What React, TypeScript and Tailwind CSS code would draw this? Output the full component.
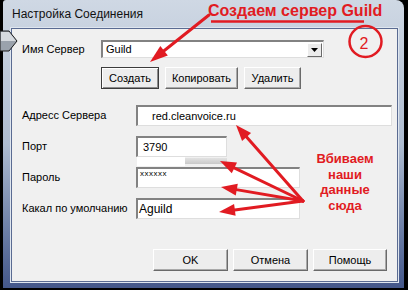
import React from 'react';

const RED = '#e11b22';

// arrow head helper: line from (x1,y1) to tip (x2,y2)
function Arrow({ x1, y1, x2, y2, len = 16, half = 6 }: { x1: number; y1: number; x2: number; y2: number; len?: number; half?: number }) {
  const dx = x2 - x1;
  const dy = y2 - y1;
  const d = Math.hypot(dx, dy);
  const ux = dx / d;
  const uy = dy / d;
  const bx = x2 - ux * len;
  const by = y2 - uy * len;
  const px = -uy * half;
  const py = ux * half;
  return (
    <g>
      <line x1={x1} y1={y1} x2={bx + ux * 2} y2={by + uy * 2} stroke={RED} strokeWidth={3} strokeLinecap="round" />
      <polygon points={`${x2},${y2} ${bx + px},${by + py} ${bx - px},${by - py}`} fill={RED} />
    </g>
  );
}

function Btn({ children, w, def }: { children: React.ReactNode; w: string; def?: boolean }) {
  return (
    <div
      className={`${w} shrink-0 h-[22px] flex items-center justify-center bg-[#ededed] text-[11px] text-black ${
        def
          ? 'border border-[#3c3c3c] shadow-[inset_1px_1px_0_#ffffff,inset_-1px_-1px_0_#8c8c8c]'
          : 'border border-t-white border-l-white border-b-[#6a6a6a] border-r-[#6a6a6a] shadow-[inset_-1px_-1px_0_#a9a9a9]'
      }`}
    >
      {children}
    </div>
  );
}

function Field({ w, children, cls = '' }: { w: string; children?: React.ReactNode; cls?: string }) {
  return (
    <div
      className={`${w} shrink-0 h-[21px] bg-white flex items-center border-t-2 border-l-2 border-t-[#828282] border-l-[#828282] border-b border-r border-b-[#dedede] border-r-[#dedede] text-[11px] text-black ${cls}`}
    >
      {children}
    </div>
  );
}

export default function App() {
  return (
    <div className="relative w-[408px] h-[290px] bg-black overflow-hidden" style={{ fontFamily: '"Liberation Sans", Arial, sans-serif' }}>
      {/* window */}
      <div className="ml-[3px] w-[401px] h-[288px] rounded-tr-[8px] rounded-tl-[3px] flex flex-col bg-gradient-to-b from-[#cfd8e4] via-[#aebcd0] to-[#44578a]">
        <div className="h-[28px] flex items-center pl-[9px] text-[12px] text-[#111]">Настройка Соединения</div>

        <div className="flex-1 ml-[8px] mr-[6px] mb-[6px] bg-[#f0f0f0] border border-[#5a6b92] shadow-[0_0_0_1px_#dfe6ef] flex flex-col pl-[10px] pr-[4px] pt-[11px]">
          {/* server name */}
          <div className="flex items-center h-[18px]">
            <div className="w-[79px] shrink-0 text-[11px] text-black">Имя Сервер</div>
            <div className="w-[223px] shrink-0 h-[18px] bg-white flex items-center justify-between border-t-2 border-l-2 border-t-[#828282] border-l-[#828282] border-b border-r border-b-[#dedede] border-r-[#dedede]">
              <span className="pl-[3px] text-[11px] text-black">Guild</span>
              <div className="w-[15px] h-[14px] mr-[1px] flex items-center justify-center bg-[#ececec] border border-t-white border-l-white border-b-[#6a6a6a] border-r-[#6a6a6a]">
                <svg width="7" height="4" viewBox="0 0 7 4">
                  <polygon points="0,0 7,0 3.5,4" fill="#000" />
                </svg>
              </div>
            </div>
          </div>

          {/* buttons */}
          <div className="flex mt-[9px] ml-[79px] gap-[6px]">
            <Btn w="w-[58px]" def>
              Создать
            </Btn>
            <Btn w="w-[73px]">Копировать</Btn>
            <Btn w="w-[57px]">Удалить</Btn>
          </div>

          {/* fields */}
          <div className="flex flex-col gap-[10px] mt-[16px]">
            <div className="flex items-center">
              <div className="w-[114px] shrink-0 text-[11px] text-black">Адресс Сервера</div>
              <Field w="w-[256px]" cls="pl-[14px]">
                red.cleanvoice.ru
              </Field>
            </div>
            <div className="flex items-center">
              <div className="w-[114px] shrink-0 text-[11px] text-black">Порт</div>
              <Field w="w-[91px]" cls="pl-[5px]">
                3790
              </Field>
            </div>
            <div className="flex items-center">
              <div className="w-[114px] shrink-0 text-[11px] text-black">Пароль</div>
              <Field w="w-[164px]" cls="pl-[2px] !items-start">
                <span className="text-[8px] leading-[10px] tracking-[0.5px]">xxxxxx</span>
              </Field>
            </div>
            <div className="flex items-center">
              <div className="w-[114px] shrink-0 text-[11px] text-black">Какал по умолчанию</div>
              <Field w="w-[164px]" cls="pl-[1px] text-[12px]">
                Aguild
              </Field>
            </div>
          </div>

          {/* bottom buttons */}
          <div className="flex justify-end gap-[5px] mt-[30px] mr-[6px]">
            <Btn w="w-[75px]">OK</Btn>
            <Btn w="w-[75px]">Отмена</Btn>
            <Btn w="w-[74px]">Помощь</Btn>
          </div>
        </div>
      </div>

      {/* paste artefact under port field */}
      <div className="absolute left-[137px] top-[157px] w-[48px] h-[9px] bg-white" />
      <div className="absolute left-[185px] top-[158px] w-[42px] h-[6px] bg-gradient-to-b from-[#e2e2e2] to-[#c9c9c9]" />

      {/* left pointer */}
      <svg className="absolute left-0 top-[29px]" width="18" height="24" viewBox="0 0 18 24">
        <polygon points="0,2 9,2 17,12 9,22 0,22" fill="#9aa2ac" stroke="#1b1b1b" strokeWidth="1" />
        <polygon points="1,3 9,3 16,12 1,12" fill="#d6dadf" />
      </svg>

      {/* annotations */}
      <div className="absolute left-[208px] top-[3px] text-[16px] leading-[16px] font-bold whitespace-nowrap" style={{ color: RED }}>
        Создаем сервер Guild
      </div>
      <div
        className="absolute left-[305px] top-[151px] w-[80px] text-center text-[13px] leading-[15.5px] font-bold"
        style={{ color: RED }}
      >
        Вбиваем
        <br />
        наши
        <br />
        данные
        <br />
        сюда
      </div>

      <svg className="absolute left-0 top-0 pointer-events-none" width="408" height="290" viewBox="0 0 408 290">
        <line x1="211" y1="21.5" x2="364" y2="21.5" stroke={RED} strokeWidth="2.5" />
        <ellipse cx="365.5" cy="41.5" rx="16" ry="15.5" fill="none" stroke={RED} strokeWidth="2.5" />
        <text x="364" y="49" textAnchor="middle" fontSize="16" fill={RED} fontFamily="Liberation Sans, Arial, sans-serif">
          2
        </text>
        <Arrow x1={209} y1={15} x2={150} y2={62} len={18} half={6} />
        <Arrow x1={303} y1={201} x2={236} y2={125} />
        <Arrow x1={303} y1={201} x2={220} y2={161} />
        <Arrow x1={303} y1={201} x2={221} y2={187} />
        <Arrow x1={303} y1={201} x2={219} y2={212} />
      </svg>
    </div>
  );
}
